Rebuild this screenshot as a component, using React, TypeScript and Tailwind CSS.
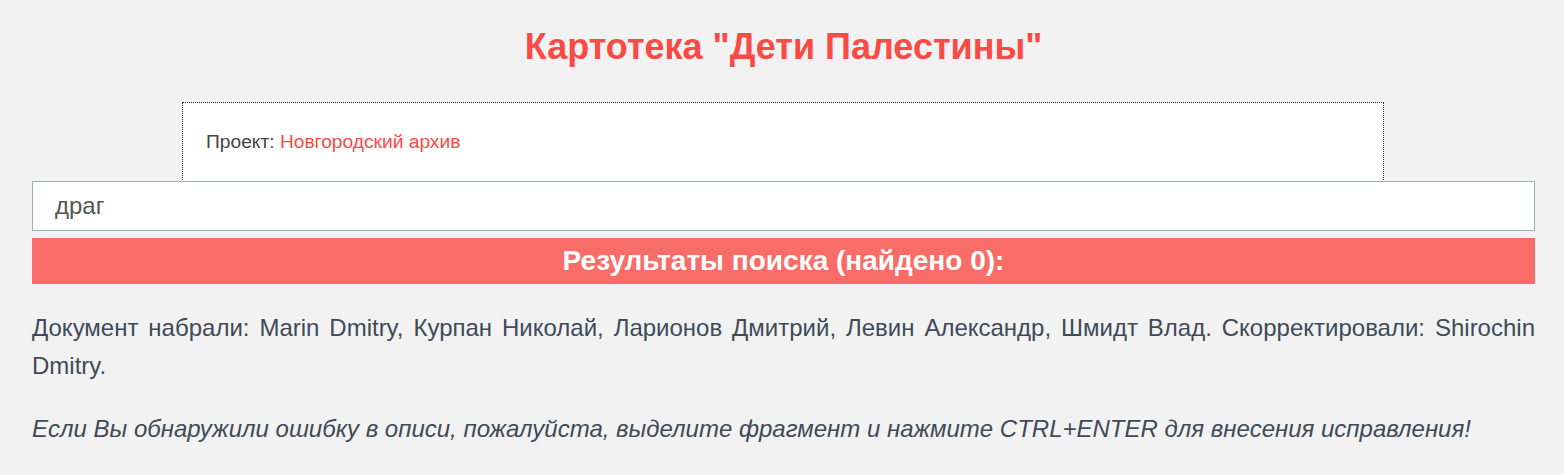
export default function App() {
  return (
    <div className="min-h-[475px] bg-[#f2f2f2] font-['Liberation_Sans',Arial,sans-serif] text-[#404a58]">
      <div className="ml-8 w-[1503px] pt-[25px]">
        <h1 className="text-center text-[36px] font-bold leading-[43px] text-[#fa4a46]">
          Картотека "Дети Палестины"
        </h1>
        <div className="ml-[150px] mt-[34px] flex h-[80px] w-[1202px] items-center border border-dotted border-[#333] bg-white px-[23px] text-[19.2px] text-[#444]">
          <span className="pt-px">
            Проект: <a className="text-[#fa4a46]">Новгородский архив</a>
          </span>
        </div>
        <div className="-mt-px flex h-[50px] items-center border border-[#9bb3b5] bg-white px-[22px] text-[24px] text-[#555]">
          драг
        </div>
        <div className="mt-[7px] flex h-[46px] items-center justify-center bg-[#f96d69] text-[28px] font-bold text-white">
          Результаты поиска (найдено 0):
        </div>
        <p className="mt-[25px] text-justify text-[24px] leading-[38px]">
          Документ набрали: Marin Dmitry, Курпан Николай, Ларионов Дмитрий, Левин Александр, Шмидт Влад. Скорректировали: Shirochin Dmitry.
        </p>
        <p className="mt-[25px] text-[24px] italic leading-[38px]">
          Если Вы обнаружили ошибку в описи, пожалуйста, выделите фрагмент и нажмите CTRL+ENTER для внесения исправления!
        </p>
      </div>
    </div>
  );
}
